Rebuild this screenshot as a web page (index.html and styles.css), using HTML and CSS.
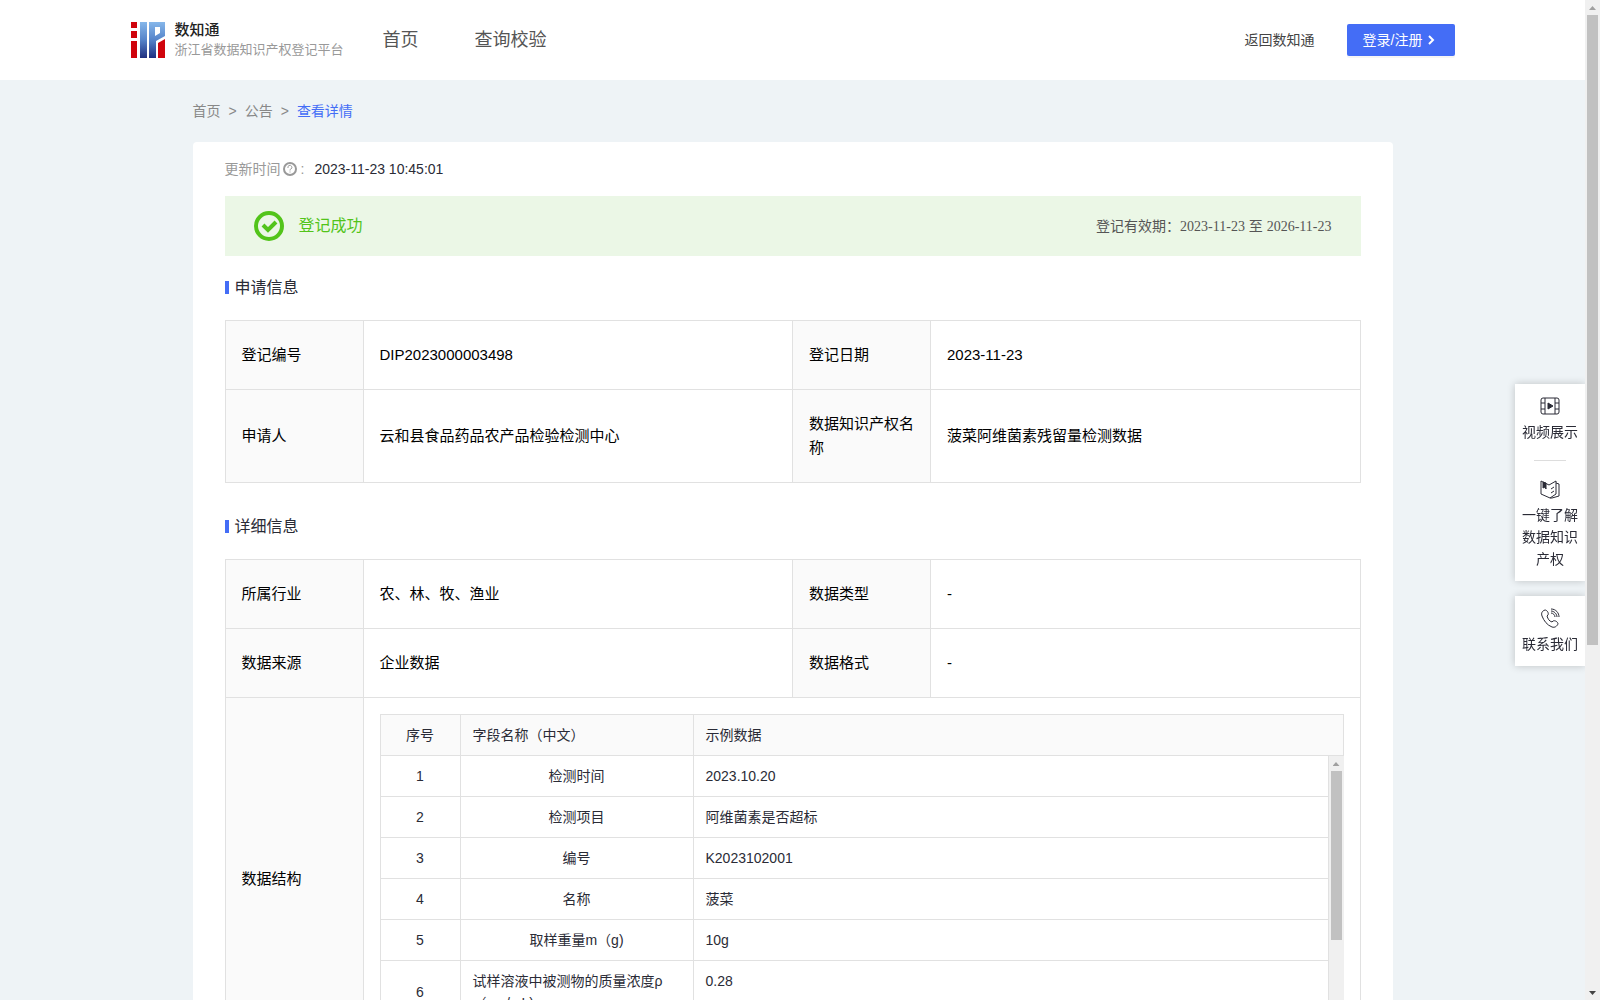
FILE: index.html
```
<!DOCTYPE html>
<html lang="zh-CN">
<head>
    <meta charset="UTF-8">
    <meta name="viewport" content="width=device-width, initial-scale=1.0">
    <title>数知通</title>
    <link rel="stylesheet" href="styles.css">
</head>
<body>
    <!-- Header -->
    <header class="header">
        <div class="header-inner">
            <a href="#" class="logo">
                <svg class="logo-icon" viewBox="0 0 34 36">
                    <defs>
                        <linearGradient id="blueFade" gradientUnits="userSpaceOnUse" x1="0" y1="0" x2="0" y2="36">
                            <stop offset="0" stop-color="#86b7ea"/>
                            <stop offset="0.5" stop-color="#5583c9"/>
                            <stop offset="1" stop-color="#1f2f80"/>
                        </linearGradient>
                    </defs>
                    <path d="M0 0h6v6H0zM0 9h6v7H0zM0 19h6v17H0z" fill="#d0040c"/>
                    <path d="M9 0h7v36H9z" fill="url(#blueFade)"/>
                    <path d="M18 0h16v14l-9 5v17h-7zM24 5v9l5-3V5z" fill="url(#blueFade)" fill-rule="evenodd"/>
                    <path d="M27 21l7-4v19h-7z" fill="#d0040c"/>
                </svg>
                <span class="logo-text">
                    <strong>数知通</strong>
                    <small>浙江省数据知识产权登记平台</small>
                </span>
            </a>
            <nav class="nav">
                <a href="#">首页</a>
                <a href="#">查询校验</a>
            </nav>
            <div class="header-right">
                <a href="#">返回数知通</a>
                <button type="button" class="login-btn">登录/注册
                    <svg viewBox="0 0 8 10"><path d="M2 1l4 4-4 4"/></svg>
                </button>
            </div>
        </div>
    </header>

    <main class="main">
        <!-- Breadcrumb -->
        <nav class="breadcrumb">
            <a href="#">首页</a><span>&gt;</span><a href="#">公告</a><span>&gt;</span><a href="#" class="current">查看详情</a>
        </nav>

        <div class="card">
            <div class="update-time">
                <span class="update-label">更新时间</span>
                <svg viewBox="0 0 14 14"><circle cx="7" cy="7" r="6"/><path d="M5 6a2 2 0 1 1 3 1c-1 .5-1 .7-1 1.500M7 9.500v1"/></svg>
                <span class="update-label">:</span>
                <time>2023-11-23 10:45:01</time>
            </div>

            <div class="status">
                <svg viewBox="0 0 30 30"><circle cx="15" cy="15" r="13"/><path d="M9 14l5 5 8-8"/></svg>
                <span class="status-text">登记成功</span>
                <span class="status-date">登记有效期：<span class="date">2023-11-23</span> 至 <span class="date">2026-11-23</span></span>
            </div>

            <!-- Application info -->
            <h2>申请信息</h2>
            <table class="info">
                <tr>
                    <th scope="row">登记编号</th>
                    <td>DIP2023000003498</td>
                    <th scope="row">登记日期</th>
                    <td>2023-11-23</td>
                </tr>
                <tr>
                    <th scope="row">申请人</th>
                    <td>云和县食品药品农产品检验检测中心</td>
                    <th scope="row">数据知识产权名称</th>
                    <td>菠菜阿维菌素残留量检测数据</td>
                </tr>
            </table>

            <!-- Details -->
            <h2>详细信息</h2>
            <table class="info">
                <tr>
                    <th scope="row">所属行业</th>
                    <td>农、林、牧、渔业</td>
                    <th scope="row">数据类型</th>
                    <td>-</td>
                </tr>
                <tr>
                    <th scope="row">数据来源</th>
                    <td>企业数据</td>
                    <th scope="row">数据格式</th>
                    <td>-</td>
                </tr>
                <tr>
                    <th scope="row">数据结构</th>
                    <td colspan="3" class="nested">
                        <div class="fields">
                            <table class="fields-head">
                                <tr>
                                    <th class="col-no">序号</th>
                                    <th class="col-name">字段名称（中文）</th>
                                    <th>示例数据</th>
                                </tr>
                            </table>
                            <div class="fields-body">
                                <table>
                                    <tr><td class="col-no">1</td><td class="col-name"><span>检测时间</span></td><td>2023.10.20</td></tr>
                                    <tr><td class="col-no">2</td><td class="col-name"><span>检测项目</span></td><td>阿维菌素是否超标</td></tr>
                                    <tr><td class="col-no">3</td><td class="col-name"><span>编号</span></td><td>K2023102001</td></tr>
                                    <tr><td class="col-no">4</td><td class="col-name"><span>名称</span></td><td>菠菜</td></tr>
                                    <tr><td class="col-no">5</td><td class="col-name"><span>取样重量m（g)</span></td><td>10g</td></tr>
                                    <tr><td class="col-no">6</td><td class="col-name"><span>试样溶液中被测物的质量浓度ρ（mg/mL)</span></td><td>0.28</td></tr>
                                </table>
                                <div class="scrollbar">
                                    <i class="arrow-up"></i>
                                    <i class="thumb"></i>
                                </div>
                            </div>
                        </div>
                    </td>
                </tr>
            </table>
        </div>
    </main>

    <!-- Side tools -->
    <aside class="side">
        <div class="side-box">
            <a href="#">
                <svg viewBox="0 0 20 20"><rect x="1" y="2" width="18" height="16" rx="2"/><path d="M5 2v16M15 2v16M1 7h4M1 13h4M15 7h4M15 13h4"/><path class="solid" d="M8 7l5 3-5 3z"/></svg>
                视频展示
            </a>
            <hr>
            <a href="#">
                <svg viewBox="0 0 20 20"><path d="M1 2l8 4 7-4v13l-6 4-9-4zM16 4l3 1v12l-7 2-2 0M11 10l3-2M11 14l3-2"/><path class="solid" d="M3 3l3 1v6L5 8 3 9z"/></svg>
                一键了解数据知识产权
            </a>
        </div>
        <div class="side-box">
            <a href="#">
                <svg viewBox="0 0 20 20"><path d="M5 2C2 3 1 5 2 8c2 5 5 9 10 11 3 1 5-1 6-3 0-2-3-4-5-3l-1 1c-3-1-4-3-5-6l1-1c1-2-1-5-3-5zM11 5c2 0 4 2 4 4M11 3c3 0 6 3 6 6M11 1c5 0 8 4 8 8"/></svg>
                联系我们
            </a>
        </div>
    </aside>

    <div class="scrollbar page-scroll">
        <i class="arrow-up"></i>
        <i class="thumb"></i>
        <i class="arrow-down"></i>
    </div>
</body>
</html>
```
FILE: styles.css
```
* {
    box-sizing: border-box;
}

body {
    margin: 0;
    padding-right: 15px;
    height: 100vh;
    overflow: hidden;
    background: #eef3f6;
    color: #2a2b36;
    font-family: "Liberation Sans", "Noto Sans CJK SC", sans-serif;
    font-size: 14px;
    line-height: 22px;
}

a {
    color: inherit;
    text-decoration: none;
}

svg {
    flex: none;
    fill: none;
    stroke: currentColor;
}

/* Header */
.header {
    background: #fff;
}

.header-inner {
    display: flex;
    align-items: center;
    max-width: 1324px;
    height: 80px;
    margin: 0 auto;
}

.logo {
    display: flex;
    align-items: center;
    gap: 10px;
}

.logo-icon {
    width: 34px;
    height: 36px;
    stroke: none;
}

.logo-text strong,
.logo-text small {
    display: block;
    line-height: 20px;
}

.logo-text strong {
    color: #222;
    font-size: 15px;
    font-weight: 500;
}

.logo-text small {
    color: #999;
    font-size: 13px;
}

.nav {
    display: flex;
    gap: 56px;
    margin-left: 39px;
    color: #555;
    font-size: 18px;
}

.header-right {
    display: flex;
    align-items: center;
    gap: 32px;
    margin-left: auto;
    color: #444;
}

.login-btn {
    display: flex;
    align-items: center;
    gap: 5px;
    width: 108px;
    height: 32px;
    padding: 0 16px;
    border: 0;
    border-radius: 2px;
    background: #446df6;
    box-shadow: 0 2px 0 rgba(0, 0, 0, 0.04);
    color: #fff;
    font: inherit;
    cursor: pointer;
}

.login-btn svg {
    width: 8px;
    height: 10px;
    stroke-width: 2;
}

/* Content */
.main {
    max-width: 1200px;
    margin: 0 auto;
}

.breadcrumb {
    display: flex;
    gap: 8px;
    padding: 20px 0;
    color: #888;
}

.breadcrumb .current {
    color: #446df6;
}

.card {
    padding: 16px 32px;
    border-radius: 4px;
    background: #fff;
}

.update-time {
    display: flex;
    align-items: center;
}

.update-label {
    color: #999;
}

.update-time svg {
    width: 14px;
    height: 14px;
    margin: 0 4px 0 2px;
    color: #999;
    stroke-width: 2;
}

.update-time svg path {
    stroke-width: 1;
}

.update-time time {
    margin-left: 10px;
}

.status {
    display: flex;
    align-items: center;
    height: 60px;
    margin: 16px 0 20px;
    padding: 0 29px;
    background: #ebf7e6;
}

.status svg {
    width: 30px;
    height: 30px;
    color: #52c41a;
    stroke-width: 4;
}

.status-text {
    margin-left: 15px;
    color: #52c41a;
    font-size: 16px;
}

.status-date {
    margin-left: auto;
    color: #555;
}

.date {
    font-family: "Liberation Serif", serif;
}

h2 {
    display: flex;
    align-items: center;
    gap: 6px;
    margin: 0 0 21px;
    font-size: 16px;
    font-weight: 400;
    line-height: 23px;
}

h2::before {
    content: "";
    width: 4px;
    height: 13px;
    background: #446df6;
}

table {
    width: 100%;
    border-collapse: collapse;
    table-layout: fixed;
}

th,
td {
    border: 1px solid #e1e1e1;
    font-weight: 400;
    text-align: left;
}

th {
    background: #fafafa;
}

.info {
    margin-bottom: 32px;
    color: #000;
    font-size: 15px;
    line-height: 24px;
}

.info > tbody > tr > th {
    width: 138px;
}

.info > tbody > tr > th,
.info > tbody > tr > td {
    padding: 22px 16px;
}

.info > tbody > tr > .nested {
    padding: 16px;
}

/* Field list */
.fields {
    color: #2a2b36;
    font-size: 14px;
    line-height: 22px;
}

.fields th,
.fields td {
    padding: 9px 12px;
}

.fields .col-no {
    width: 80px;
    text-align: center;
}

.fields .col-name {
    width: 233px;
}

.fields td.col-name {
    text-align: center;
}

.col-name span {
    display: inline-block;
    text-align: left;
    vertical-align: top;
}

.fields td:last-child {
    vertical-align: top;
}

.fields-body {
    display: flex;
    height: 288px;
    overflow: hidden;
}

.fields-body table {
    flex: 1;
    align-self: flex-start;
}

.fields-body tr:first-child td {
    border-top: 0;
}

/* Scrollbars */
.scrollbar {
    display: flex;
    flex: none;
    flex-direction: column;
    align-items: center;
    width: 15px;
    background: #f0f0f0;
}

.arrow-up,
.arrow-down {
    flex: none;
    width: 7px;
    height: 4px;
    background: #a0a0a0;
    clip-path: polygon(50% 0, 100% 100%, 0 100%);
    margin: 6px 0 5px;
}

.arrow-down {
    margin-top: auto;
    background: #444;
    clip-path: polygon(0 0, 100% 0, 50% 100%);
}

.thumb {
    width: 11px;
    height: 169px;
    background: #c1c1c1;
}

.page-scroll {
    position: fixed;
    top: 0;
    right: 0;
    bottom: 0;
}

.page-scroll .thumb {
    height: 63%;
}

/* Side tools */
.side {
    position: fixed;
    top: 384px;
    right: 15px;
    width: 70px;
}

.side-box {
    margin-bottom: 15px;
    padding: 12px 7px 11px;
    background: #fff;
    box-shadow: 0 0 8px rgba(0, 0, 0, 0.2);
    clip-path: inset(-10px 0 -10px -10px);
    text-align: center;
}

.side-box a {
    display: block;
}

.side-box svg {
    display: block;
    width: 20px;
    height: 20px;
    margin: 0 auto 5px;
}

.side-box .solid {
    fill: currentColor;
}

.side-box hr {
    width: 32px;
    margin: 17px auto 18px;
    border: 0;
    border-top: 1px solid #ddd;
}
```
